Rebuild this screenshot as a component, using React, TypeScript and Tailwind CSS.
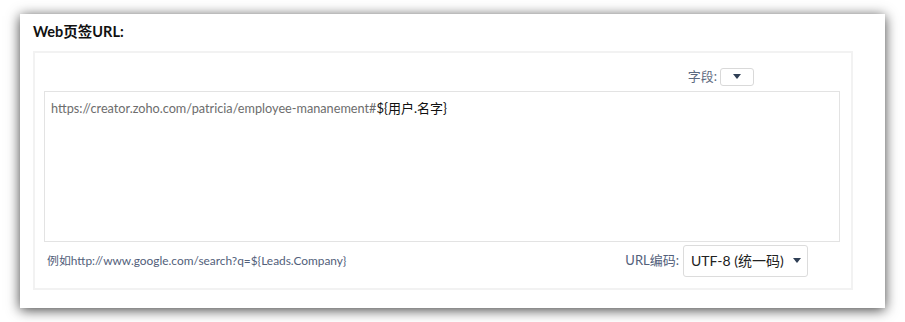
export default function App() {
  const font = { fontFamily: 'Lato, "Noto Sans CJK SC", sans-serif' }
  return (
    <div className="w-[905px] h-[322px] bg-white pt-[14px] pl-[20px]" style={font}>
      <div className="w-[865px] h-[294px] bg-white shadow-[0_2px_12px_rgba(0,0,0,0.75)] pt-[8px] pl-[13px]">
        <h2 className="text-[14.5px] leading-[20px] font-bold text-[#111]">Web页签URL:</h2>

        <div className="mt-[9px] w-[820px] h-[239px] border-2 border-[#f2f2f2] px-[9px]">
          {/* field picker */}
          <div className="flex items-center justify-end pr-[88px] pt-[14px] gap-[3px]">
            <span className="text-[13px] text-[#5d6a80]">字段:</span>
            <button className="w-[34px] h-[18px] border border-[#d9d9d9] rounded-[3px] flex items-center justify-center">
              <svg width="8" height="5" viewBox="0 0 8 5"><path d="M0 0h8L4 5z" fill="#2f3f55" /></svg>
            </button>
          </div>

          <div className="mt-[4px] w-[796px] h-[151px] border border-[#e3e3e3] px-[6px] pt-[7px] text-[12.7px] leading-[18px]">
            <span className="text-[#6d6d6d]">https://creator.zoho.com/patricia/employee-mananement#</span>
            <span className="text-[#111] text-[13px]">{'${用户.名字}'}</span>
          </div>

          <div className="flex items-center justify-between mt-[3px] w-[796px] pl-[3px] pr-[32px]">
            <span className="text-[11.9px] text-[#52607a]">{'例如http://www.google.com/search?q=${Leads.Company}'}</span>
            <div className="flex items-center gap-[4px]">
              <span className="text-[13px] text-[#52607a]">URL编码:</span>
              <div className="w-[125px] h-[32px] border border-[#dcdcdc] rounded-[3px] flex items-center pl-[7px] gap-[9px] whitespace-nowrap">
                <span className="text-[14px] text-[#222]">UTF-8 (统一码)</span>
                <svg width="8" height="5" viewBox="0 0 8 5"><path d="M0 0h8L4 5z" fill="#2f3f55" /></svg>
              </div>
            </div>
          </div>
        </div>
      </div>
    </div>
  )
}
